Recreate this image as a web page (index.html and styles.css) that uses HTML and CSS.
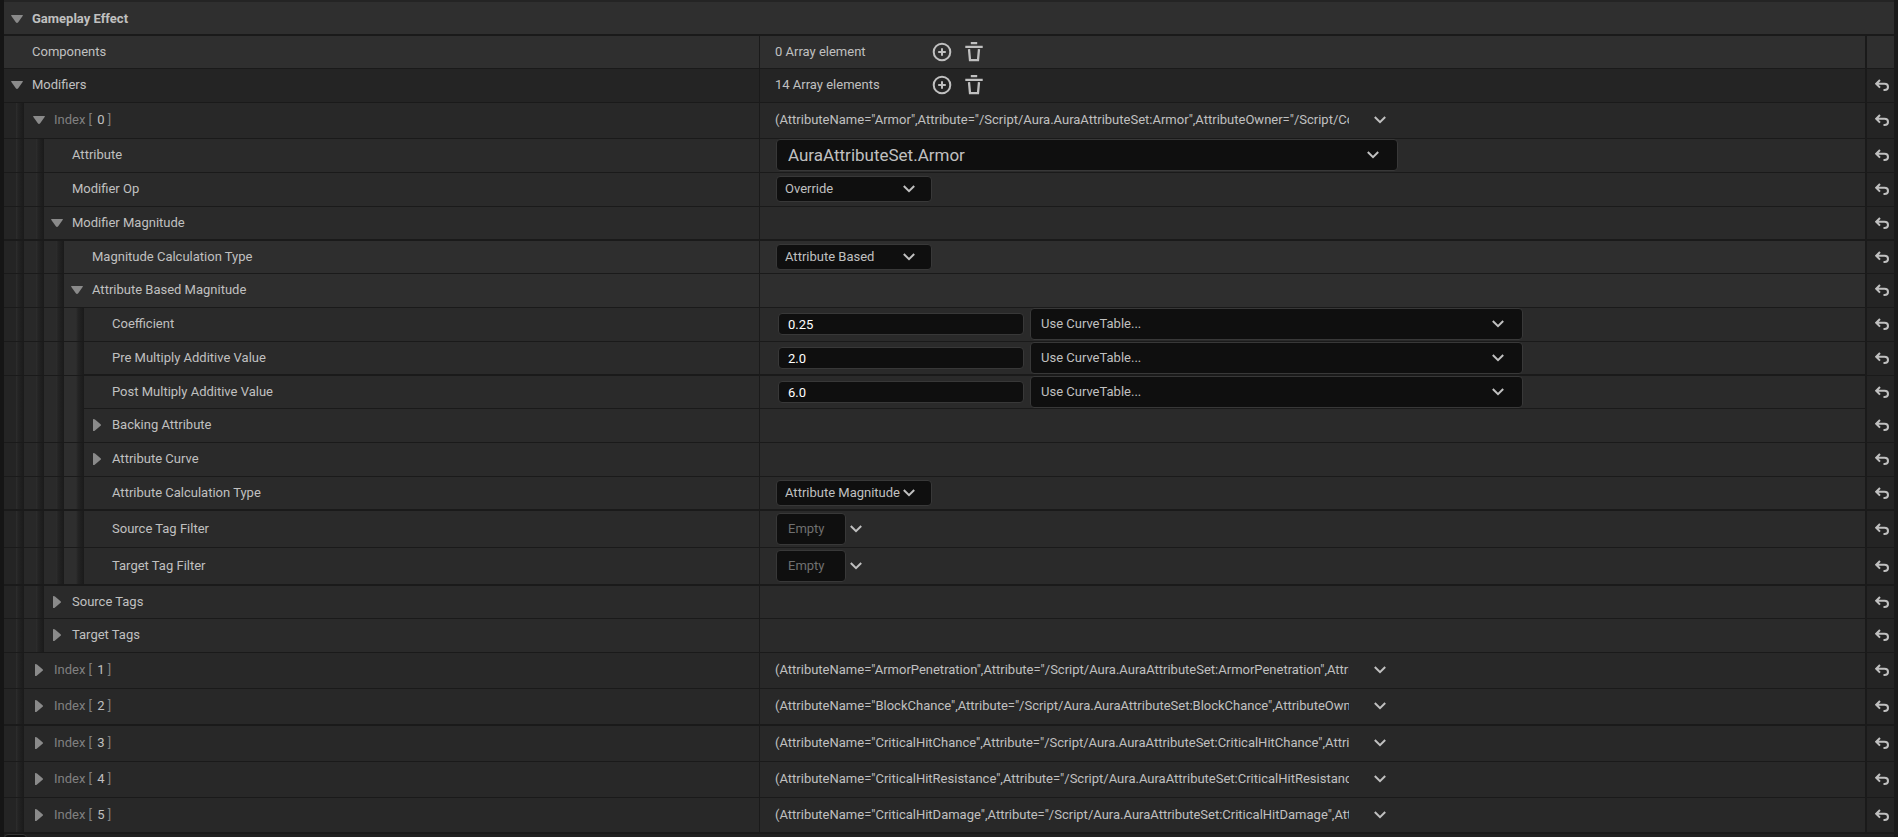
FILE: index.html
```
<!DOCTYPE html>
<html lang="en">
<head>
  <meta charset="UTF-8">
  <title>Gameplay Effect</title>
  <link rel="stylesheet" href="styles.css">
</head>
<body>

  <!-- Shared icons -->
  <svg class="sprite" aria-hidden="true">
    <symbol id="open" viewBox="0 0 12 12"><path d="M0 2.6Q0 2 .8 2H11.2Q12 2 12 2.6L7.2 9.2Q6 10.6 4.8 9.2Z"/></symbol>
    <symbol id="closed" viewBox="0 0 12 12"><path d="M2 .6Q2 0 2.6 0Q3.4 0 4 .6L9.6 5.2Q10.4 6 9.6 6.8L4 11.6Q3.4 12.2 2.6 12Q2 12 2 11.4Z"/></symbol>
    <symbol id="chevron" viewBox="0 0 12 8"><path d="M.8 1L6 6.200L11.200 1"/></symbol>
    <symbol id="add" viewBox="0 0 20 20"><circle cx="10" cy="10" r="8.3"/><path d="M10 6.200V13.800M6.200 10H13.800"/></symbol>
    <symbol id="trash" viewBox="0 0 20 20"><path d="M6.800 1.200H13.200M1.300 4.800H18.700M5 7.200L6 18.200H14L15 7.200" stroke-width="2.3"/></symbol>
    <symbol id="undo" viewBox="0 0 14 12"><path d="M5 1L1.200 4.800L5 8.600M1.500 4.800H9.500Q13 4.800 13 8Q13 11 9.500 11H8.500"/></symbol>
  </svg>

  <main class="details" id="details"></main>

  <script src="script.js"></script>
</body>
</html>
```
FILE: styles.css
```
* {
  box-sizing: border-box;
}

body {
  margin: 0;
  background-color: #242424;
  color: #c0c0c0;
  font-family: Roboto, sans-serif;
  font-size: 13px;
  line-height: 16px;
}

button, input, select {
  font: inherit;
  color: inherit;
}

button {
  padding: 0;
  border: none;
  background: none;
}

svg {
  display: block;
  fill: none;
  stroke: currentColor;
  stroke-width: 2;
}

.sprite {
  display: none;
}

.details {
  border: solid #1a1a1a;
  border-width: 0 4px;
  border-left-color: #151515;
  padding-top: 2px;
}

/* Rows */
.row {
  display: grid;
  grid-template-columns: minmax(0, 756fr) minmax(0, 1105fr) 29px;
  height: 34px;
  border-bottom: 1px solid #1a1a1a;
  background-color: #242424;
}

.ruled {
  border-bottom-width: 2px;
}

.ruled + .row {
  height: 33px;
}

.row.index {
  height: 36px;
}

.row.tags {
  height: 37px;
}

.row.index.ruled {
  height: 37px;
}

.row.tags.ruled {
  height: 38px;
}

.row.index.ruled.last {
  height: 36px;
}

.heading {
  grid-template-columns: 1fr;
  background-color: #2f2f2f;
  font-weight: bold;
}

.level1 { background-color: #282828; }
.level2, .level4 { background-color: #2a2a2a; }
.level3 { background-color: #2e2e2e; }
.hovered { background-color: #2f2f2f; }

.name {
  display: flex;
  align-items: stretch;
  border-right: 1px solid #1a1a1a;
}

.heading .name {
  border-right: none;
}

.label {
  display: flex;
  align-items: center;
  gap: 9px;
  padding: 0 0 1px 7px;
}

.heading .label {
  padding: 1px 0 0 7px;
}

.index .label {
  padding-left: 9px;
}

.label svg, .spacer {
  width: 12px;
  height: 12px;
  fill: #8a8a8a;
  stroke: none;
}

.index .label span {
  color: #808080;
  white-space: pre;
}

.index .label b {
  margin-left: 2px;
  color: #c0c0c0;
  font-weight: normal;
}

.indent {
  flex: none;
  width: 20px;
  background-image: linear-gradient(to right, transparent 12px, #2e2e2e 12px, #242424 14px, #1a1a1a 20px);
}

.indent0 { background-color: #242424; }
.indent1 { background-color: #282828; }
.indent2 { background-color: #2a2a2a; }
.indent3 { background-color: #2e2e2e; }

.value {
  display: flex;
  align-items: center;
  padding: 0 0 1px 15px;
}

.reset {
  display: flex;
  align-items: center;
  justify-content: center;
  padding: 0 0 1px 3px;
  border-left: 2px solid #1a1a1a;
  background-color: #242424;
}

.hovered .reset {
  background-color: #2f2f2f;
}

.reset svg {
  width: 14px;
  height: 12px;
}

/* Values */
.count {
  width: 151px;
}

.tool {
  display: flex;
  justify-content: center;
  width: 32px;
}

.tool svg {
  width: 20px;
  height: 20px;
}

.summary {
  width: 574px;
  overflow: hidden;
  white-space: nowrap;
}

.more {
  margin-left: 25px;
}

.chevron {
  width: 12px;
  height: 8px;
}

.combo {
  display: grid;
  align-items: center;
  width: 156px;
  height: 26px;
  margin-left: 1px;
}

.combo > * {
  grid-area: 1 / 1;
}

.combo select {
  width: 100%;
  height: 100%;
  padding: 0 8px;
  appearance: none;
}

.combo .chevron {
  justify-self: end;
  margin-right: 17px;
  pointer-events: none;
}

.combo select, .number, .empty {
  border: 1px solid #383838;
  border-radius: 4px;
  background-color: #0f0f0f;
}

.combo.attribute {
  width: 622px;
  height: 32px;
  font-size: 17px;
  line-height: 20px;
}

.combo.attribute select {
  padding-left: 11px;
}

.combo.curve {
  width: 493px;
  height: 32px;
  margin-left: 6px;
}

.combo.curve select {
  padding-left: 10px;
}

.combo.attribute .chevron, .combo.curve .chevron {
  margin-right: 19px;
}

.number {
  width: 246px;
  height: 22px;
  margin-left: 3px;
  padding: 0 9px;
  color: #fff;
}

.empty {
  width: 70px;
  height: 32px;
  margin-left: 1px;
  padding-left: 11px;
  color: #707070;
  text-align: left;
}

.empty + .more {
  margin-left: 4px;
}

/* Top edge of the next panel */
.next {
  height: 3px;
  overflow: hidden;
  background-color: #202020;
}

.next div {
  width: 23px;
  height: 12px;
  border: 1px solid #353535;
  border-radius: 4px;
  background-color: #0f0f0f;
}
```
FILE: script.js
```
const NS = 'AuraAttributeSet';

function icon(id, cls) {
  return `<svg class="${cls || ''}" aria-hidden="true"><use href="#${id}"/></svg>`;
}

function count(text) {
  return `<span class="count">${text}</span>
    <button class="tool" aria-label="Add element">${icon('add')}</button>
    <button class="tool" aria-label="Delete all elements">${icon('trash')}</button>`;
}

function combo(text, label, cls) {
  return `<div class="combo ${cls || ''}">
    <select aria-label="${label}"><option>${text}</option></select>${icon('chevron', 'chevron')}
  </div>`;
}

function summary(attr) {
  const text = `(AttributeName="${attr}",Attribute="/Script/Aura.${NS}:${attr}",AttributeOwner="/Script/CoreUObject.Class'/Script/Aura.${NS}'")`;
  return `<span class="summary">${text}</span>
    <button class="more" aria-label="Element options">${icon('chevron', 'chevron')}</button>`;
}

function number(value, label) {
  return `<input class="number" type="text" value="${value}" aria-label="${label}">` +
    combo('Use CurveTable...', label + ' curve table', 'curve');
}

function empty() {
  return `<button class="empty">Empty</button>
    <button class="more" aria-label="Edit tags">${icon('chevron', 'chevron')}</button>`;
}

function index(n) {
  return `<span>Index [ <b>${n}</b> ]</span>`;
}

// level, arrow, label, value, extra classes
const rows = [
  [0, '', 'Components', count('0 Array element'), 'hovered'],
  [0, 'open', 'Modifiers', count('14 Array elements')],
  [1, 'open', index(0), summary('Armor'), 'index'],
  [2, '', 'Attribute', combo(NS + '.Armor', 'Attribute', 'attribute')],
  [2, '', 'Modifier Op', combo('Override', 'Modifier Op')],
  [2, 'open', 'Modifier Magnitude', '', 'ruled'],
  [3, '', 'Magnitude Calculation Type', combo('Attribute Based', 'Magnitude Calculation Type')],
  [3, 'open', 'Attribute Based Magnitude', ''],
  [4, '', 'Coefficient', number('0.25', 'Coefficient')],
  [4, '', 'Pre Multiply Additive Value', number('2.0', 'Pre Multiply Additive Value'), 'ruled'],
  [4, '', 'Post Multiply Additive Value', number('6.0', 'Post Multiply Additive Value')],
  [4, 'closed', 'Backing Attribute', ''],
  [4, 'closed', 'Attribute Curve', ''],
  [4, '', 'Attribute Calculation Type', combo('Attribute Magnitude', 'Attribute Calculation Type'), 'ruled'],
  [4, '', 'Source Tag Filter', empty(), 'tags'],
  [4, '', 'Target Tag Filter', empty(), 'tags ruled'],
  [2, 'closed', 'Source Tags', ''],
  [2, 'closed', 'Target Tags', ''],
  [1, 'closed', index(1), summary('ArmorPenetration'), 'index'],
  [1, 'closed', index(2), summary('BlockChance'), 'index ruled'],
  [1, 'closed', index(3), summary('CriticalHitChance'), 'index'],
  [1, 'closed', index(4), summary('CriticalHitResistance'), 'index'],
  [1, 'closed', index(5), summary('CriticalHitDamage'), 'index ruled last']
];

let html = `<div class="row heading ruled"><div class="name"><div class="label">${icon('open')}Gameplay Effect</div></div></div>`;

for (const [level, arrow, label, value, extra] of rows) {
  let indents = '';
  for (let i = 0; i < level; i++) {
    indents += `<div class="indent indent${i}"></div>`;
  }
  const reset = label === 'Components' ? '' : `<button aria-label="Reset to default">${icon('undo')}</button>`;

  html += `
    <div class="row level${level} ${extra || ''}">
      <div class="name">${indents}<div class="label">${arrow ? icon(arrow) : '<i class="spacer"></i>'}${label}</div></div>
      <div class="value">${value}</div>
      <div class="reset">${reset}</div>
    </div>`;
}

html += '<div class="next"><div></div></div>';

document.getElementById('details').innerHTML = html;
```
